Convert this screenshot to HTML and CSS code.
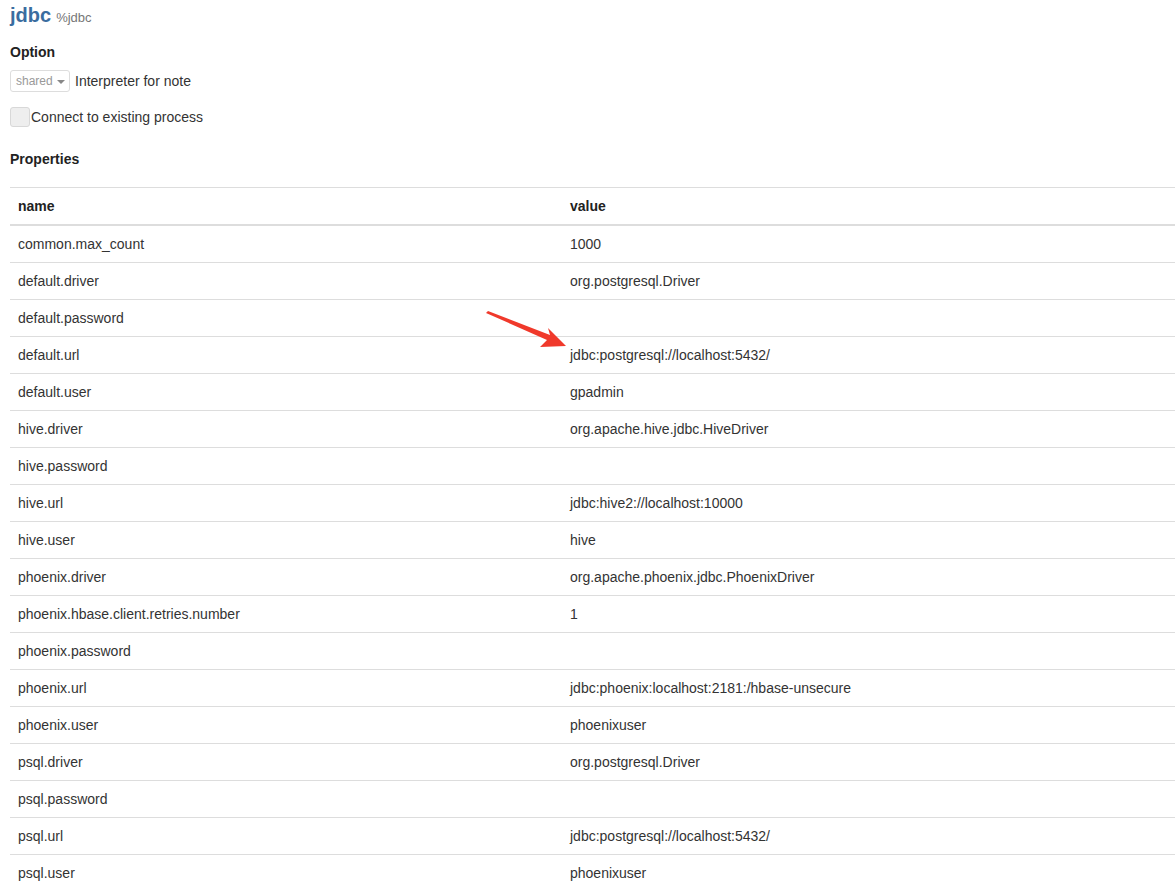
FILE: index.html
```html
<!DOCTYPE html>
<html>
<head>
<meta charset="utf-8">
<link rel="stylesheet" href="styles.css">
</head>
<body>
<div class="page">
  <div class="title-row">
    <span class="title">jdbc</span>
    <span class="subtitle">%jdbc</span>
  </div>
  <div class="section-label option-label">Option</div>
  <div class="option-row">
    <span class="select">shared <span class="caret"></span></span>
    <span class="option-text">Interpreter for note</span>
  </div>
  <div class="check-row">
    <span class="checkbox"></span>
    <span class="check-text">Connect to existing process</span>
  </div>
  <div class="section-label props-label">Properties</div>
  <table class="props">
    <thead>
      <tr><th class="col-name">name</th><th>value</th></tr>
    </thead>
    <tbody>
      <tr><td>common.max_count</td><td>1000</td></tr>
      <tr><td>default.driver</td><td>org.postgresql.Driver</td></tr>
      <tr><td>default.password</td><td></td></tr>
      <tr><td>default.url</td><td>jdbc:postgresql://localhost:5432/</td></tr>
      <tr><td>default.user</td><td>gpadmin</td></tr>
      <tr><td>hive.driver</td><td>org.apache.hive.jdbc.HiveDriver</td></tr>
      <tr><td>hive.password</td><td></td></tr>
      <tr><td>hive.url</td><td>jdbc:hive2://localhost:10000</td></tr>
      <tr><td>hive.user</td><td>hive</td></tr>
      <tr><td>phoenix.driver</td><td>org.apache.phoenix.jdbc.PhoenixDriver</td></tr>
      <tr><td>phoenix.hbase.client.retries.number</td><td>1</td></tr>
      <tr><td>phoenix.password</td><td></td></tr>
      <tr><td>phoenix.url</td><td>jdbc:phoenix:localhost:2181:/hbase-unsecure</td></tr>
      <tr><td>phoenix.user</td><td>phoenixuser</td></tr>
      <tr><td>psql.driver</td><td>org.postgresql.Driver</td></tr>
      <tr><td>psql.password</td><td></td></tr>
      <tr><td>psql.url</td><td>jdbc:postgresql://localhost:5432/</td></tr>
      <tr><td>psql.user</td><td>phoenixuser</td></tr>
    </tbody>
  </table>
</div>
<svg class="arrow" width="100" height="50" viewBox="0 0 100 50">
  <polygon points="0,2 2,0 64,24 62,17 80,35 54,36 61,29" fill="#f0392b"/>
</svg>
</body>
</html>
```
FILE: styles.css
```css
html, body {
  margin: 0;
  padding: 0;
  background: #fff;
  overflow: hidden;
}
body {
  font-family: "Liberation Sans", Arial, sans-serif;
  font-size: 14px;
  line-height: 20px;
  color: #333;
}
.page {
  padding-left: 10px;
}
.title-row {
  height: 31px;
  display: flex;
  align-items: baseline;
  gap: 5px;
  padding-top: 1px;
}
.title {
  font-size: 20px;
  font-weight: bold;
  color: #3a6d9f;
  line-height: 28px;
}
.subtitle {
  font-size: 13px;
  color: #777;
}
.section-label {
  font-weight: bold;
  font-size: 14px;
  color: #222;
}
.option-label {
  margin-top: 10px;
}
.option-row {
  display: flex;
  align-items: center;
  gap: 5px;
  margin-top: 8px;
  height: 22px;
}
.select {
  display: inline-flex;
  align-items: center;
  gap: 4px;
  padding: 0 5px;
  border: 1px solid #ddd;
  border-radius: 3px;
  font-size: 12px;
  color: #999;
  box-sizing: border-box;
  width: 60px;
  height: 22px;
}
.caret {
  width: 0;
  height: 0;
  border-left: 4px solid transparent;
  border-right: 4px solid transparent;
  border-top: 4px solid #888;
  margin-top: 1px;
}
.option-text {
  color: #333;
}
.check-row {
  display: flex;
  align-items: center;
  margin-top: 15px;
  height: 20px;
}
.checkbox {
  width: 18px;
  height: 18px;
  background: #eee;
  border: 1px solid #d8d8d8;
  border-radius: 3px;
  margin-right: 1px;
}
.props-label {
  margin-top: 22px;
}
.props {
  margin-top: 18px;
  width: 1200px;
  border-collapse: collapse;
  border-spacing: 0;
}
.props th, .props td {
  text-align: left;
  padding: 8px;
  line-height: 20px;
  border-top: 1px solid #ddd;
  vertical-align: top;
}
.props th {
  font-weight: bold;
  color: #222;
  border-bottom: 2px solid #ddd;
}
.props tbody tr:first-child td {
  border-top: 0;
}
.col-name {
  width: 536px;
}
.arrow {
  position: absolute;
  left: 486px;
  top: 311px;
}
```
